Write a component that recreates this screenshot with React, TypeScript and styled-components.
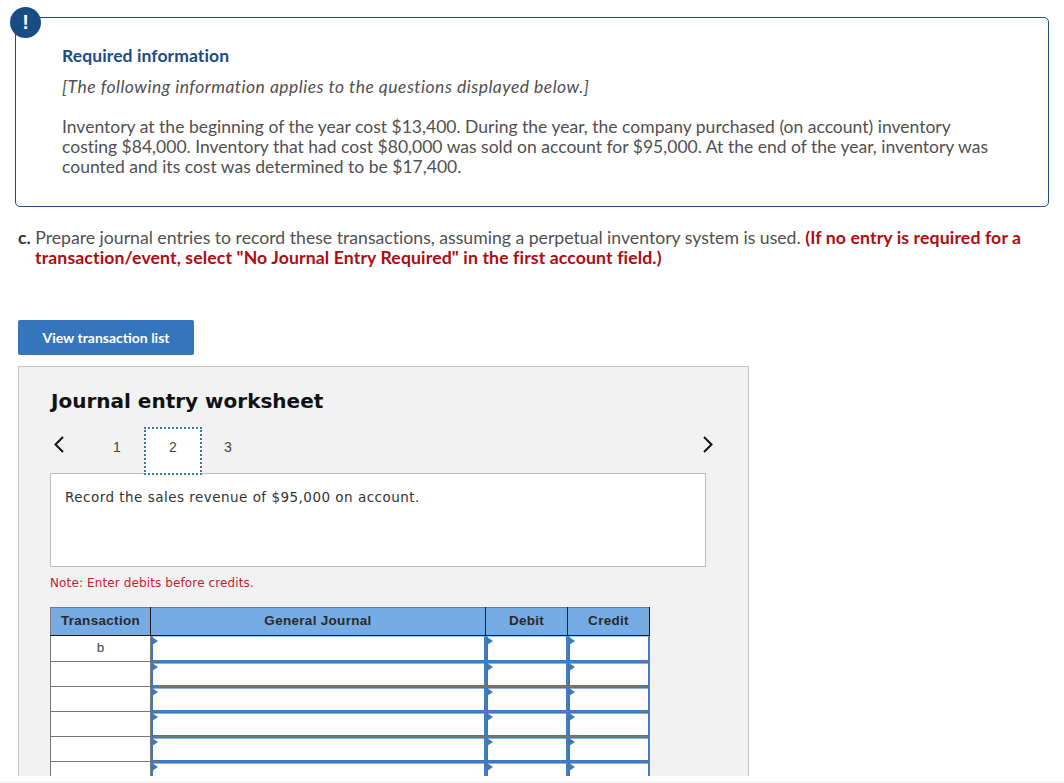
import React from 'react';
import styled, { createGlobalStyle } from 'styled-components';

const GlobalStyle = createGlobalStyle`
  html, body {
    margin: 0;
    padding: 0;
    background: #fff;
    overflow: hidden;
  }
`;

const Page = styled.div`
  width: 1064px;
  height: 783px;
  overflow: hidden;
  background: #f6f6f6;
`;

const Sheet = styled.div`
  height: 781px;
  background: #fff;
`;

const Content = styled.div`
  height: 776px;
  overflow: hidden;
  padding: 17px 15px 0 15px;
  box-sizing: border-box;
  font-family: Lato, "Liberation Sans", sans-serif;
  font-variant-ligatures: none;
`;

const InfoBox = styled.section`
  position: relative;
  width: 1034px;
  height: 190px;
  box-sizing: border-box;
  border: 1px solid #1a4b84;
  border-radius: 5px;
  padding: 28px 46px 0 46px;
  color: #505050;
  font-size: 17.5px;
`;

const Badge = styled.div`
  position: absolute;
  left: -6px;
  top: -11px;
  width: 31px;
  height: 31px;
  border-radius: 50%;
  background: #1a4b84;
  color: #fff;
  font: bold 20px/31px "Liberation Sans", sans-serif;
  text-align: center;
`;

const InfoTitle = styled.h2`
  margin: 0 0 11px;
  font-size: 17.5px;
  line-height: 20px;
  font-weight: 700;
  letter-spacing: 0.1px;
  color: #1a4b84;
`;

const InfoLead = styled.p`
  margin: 0 0 20px;
  font-style: italic;
  line-height: 20px;
  letter-spacing: 0.48px;
`;

const InfoBody = styled.p`
  margin: 0;
  line-height: 20px;
  letter-spacing: 0.01px;
`;

const Question = styled.p`
  margin: 21px 0 0 20px;
  text-indent: -17px;
  width: 1014px;
  font-size: 17.65px;
  line-height: 20px;
  color: #505050;

  b {
    color: #333;
  }
  strong {
    color: #b00b10;
    font-weight: 700;
    letter-spacing: 0.12px;
  }
`;

const ListButton = styled.button`
  display: block;
  margin: 52px 0 0 3px;
  width: 176px;
  height: 35px;
  border: none;
  border-radius: 2px;
  background: #3575bb;
  color: #fff;
  font-family: Lato, sans-serif;
  font-size: 14px;
  font-weight: 700;
`;

const Worksheet = styled.div`
  margin: 11px 0 0 3px;
  width: 731px;
  height: 430px;
  box-sizing: border-box;
  border: 1px solid #c4c4c4;
  background: #f2f2f2;
  padding: 21px 31px 0 31px;
  font-family: "DejaVu Sans", Verdana, sans-serif;
`;

const WorksheetTitle = styled.h3`
  margin: 0 0 0 1px;
  font-size: 20px;
  line-height: 26px;
  font-weight: 700;
  color: #111;
`;

const StepRow = styled.div`
  display: flex;
  align-items: flex-start;
  height: 46px;
  margin-top: 13px;
  width: 665px;
`;

const Arrow = styled.svg`
  flex: none;
  width: 14px;
  height: 18px;
  margin-top: 8px;
`;

const Steps = styled.div`
  flex: 1;
  display: flex;
  padding-left: 25px;
`;

const Step = styled.div<{ $active?: boolean }>`
  width: ${p => (p.$active ? '58px' : '56px')};
  margin-left: ${p => (p.$active ? '-1px' : '0')};
  height: 48px;
  box-sizing: border-box;
  text-align: center;
  font: 14px/36px "Liberation Sans", sans-serif;
  color: #444;
  background: ${p => (p.$active ? '#fff' : 'transparent')};
  border: ${p => (p.$active ? '2px dotted #3575bb' : '2px solid transparent')};
  position: relative;
  z-index: 1;

  & + & + & {
    margin-left: -2px;
  }
`;

const Prompt = styled.div`
  width: 656px;
  height: 94px;
  box-sizing: border-box;
  border: 1px solid #bdbdbd;
  background: #fff;
  padding: 14px;
  font-size: 13.5px;
  line-height: 18px;
  letter-spacing: 0.48px;
  color: #333;
`;

const Note = styled.p`
  margin: 8px 0 0;
  font-size: 12px;
  line-height: 16px;
  letter-spacing: 0.12px;
  color: #c8202a;
`;

const Table = styled.table`
  margin-top: 16px;
  border-collapse: collapse;
  table-layout: fixed;
  width: 600px;
  font-family: "Liberation Sans", Arial, sans-serif;
`;

const HeadCell = styled.th`
  height: 28px;
  padding: 0 0 2px;
  box-sizing: border-box;
  background: #77abe4;
  border: 1px solid #1c1c1c;
  border-top-color: #777;
  border-left-color: #777;
  font-size: 13.5px;
  font-weight: 700;
  letter-spacing: 0.3px;
  color: #2a2a2a;
`;

const TxCell = styled.td`
  padding: 0 0 2px;
  box-sizing: border-box;
  background: #fff;
  border: 1px solid #777;
  text-align: center;
  font-size: 13.5px;
  color: #444;
`;

const EntryCell = styled.td`
  padding: 0;
  background: #fff;
  border: 1px solid #777;
  vertical-align: top;
`;

const EntryField = styled.div<{ $first?: boolean }>`
  position: relative;
  height: ${p => (p.$first ? '25px' : '24px')};
  box-sizing: border-box;
  border-style: solid;
  border-color: #3e78bb;
  border-width: 1px 1px 1px 2px;
  border-top-color: ${p => (p.$first ? '#a9c6e6' : '#3e78bb')};
  box-shadow: ${p => (p.$first ? 'none' : 'inset 0 1px 0 #8fb2da')};
  background: #fff;
`;

const Marker = styled.span`
  position: absolute;
  left: -1px;
  top: 0;
  width: 0;
  height: 0;
  border-left: 6px solid #3e78bb;
  border-top: 4px solid transparent;
  border-bottom: 4px solid transparent;
`;

const rows = ['b', '', '', '', '', ''];

const Field = ({ first }: { first: boolean }) => (
  <EntryCell>
    <EntryField $first={first}>
      <Marker />
    </EntryField>
  </EntryCell>
);

export default function App() {
  return (
    <Page>
      <GlobalStyle />
      <Sheet>
        <Content>
          <InfoBox>
            <Badge>!</Badge>
            <InfoTitle>Required information</InfoTitle>
            <InfoLead>[The following information applies to the questions displayed below.]</InfoLead>
            <InfoBody>
              Inventory at the beginning of the year cost $13,400. During the year, the company purchased (on account) inventory
              <br />
              costing $84,000. Inventory that had cost $80,000 was sold on account for $95,000. At the end of the year, inventory was
              <br />
              counted and its cost was determined to be $17,400.
            </InfoBody>
          </InfoBox>
          <Question>
            <b>c.</b> Prepare journal entries to record these transactions, assuming a perpetual inventory system is used.{' '}
            <strong>
              (If no entry is required for a
              <br />
              transaction/event, select "No Journal Entry Required" in the first account field.)
            </strong>
          </Question>
          <ListButton>View transaction list</ListButton>
          <Worksheet>
            <WorksheetTitle>Journal entry worksheet</WorksheetTitle>
            <StepRow>
              <Arrow viewBox="0 0 14 18">
                <path d="M13 2 L5.5 9.5 L13 17" fill="none" stroke="#111" strokeWidth="2" />
              </Arrow>
              <Steps>
                <Step>1</Step>
                <Step $active>2</Step>
                <Step>3</Step>
              </Steps>
              <Arrow viewBox="0 0 14 18">
                <path d="M3 2 L10.5 9.5 L3 17" fill="none" stroke="#111" strokeWidth="2" />
              </Arrow>
            </StepRow>
            <Prompt>Record the sales revenue of $95,000 on account.</Prompt>
            <Note>Note: Enter debits before credits.</Note>
            <Table>
              <colgroup>
                <col width={100} />
                <col width={335} />
                <col width={82} />
                <col width={82} />
              </colgroup>
              <thead>
                <tr>
                  <HeadCell>Transaction</HeadCell>
                  <HeadCell>General Journal</HeadCell>
                  <HeadCell>Debit</HeadCell>
                  <HeadCell>Credit</HeadCell>
                </tr>
              </thead>
              <tbody>
                {rows.map((tx, i) => (
                  <tr key={i}>
                    <TxCell>{tx}</TxCell>
                    <Field first={i === 0} />
                    <Field first={i === 0} />
                    <Field first={i === 0} />
                  </tr>
                ))}
              </tbody>
            </Table>
          </Worksheet>
        </Content>
      </Sheet>
    </Page>
  );
}
